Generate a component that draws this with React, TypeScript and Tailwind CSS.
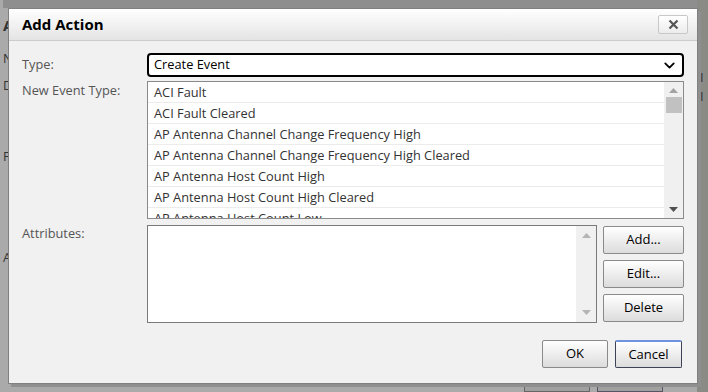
import { ChevronDown } from "lucide-react";

const eventTypes = [
  "ACI Fault",
  "ACI Fault Cleared",
  "AP Antenna Channel Change Frequency High",
  "AP Antenna Channel Change Frequency High Cleared",
  "AP Antenna Host Count High",
  "AP Antenna Host Count High Cleared",
  "AP Antenna Host Count Low",
];

function Tri({ dir, color }: { dir: "up" | "down"; color: string }) {
  return (
    <svg width="9" height="5" viewBox="0 0 9 5">
      {dir === "up" ? (
        <path d="M0 5 L4.5 0 L9 5 Z" fill={color} />
      ) : (
        <path d="M0 0 L4.5 5 L9 0 Z" fill={color} />
      )}
    </svg>
  );
}

function Btn({ label, focused }: { label: string; focused?: boolean }) {
  return (
    <button
      className={
        "flex h-[28px] w-full items-center justify-center rounded-[2px] border bg-gradient-to-b from-white to-[#dcdcdc] text-[13px] text-black " +
        (focused
          ? "border-[#3c4356] border-t-2 border-t-[#6f93de]"
          : "border-[#8a8a8a]")
      }
    >
      {label}
    </button>
  );
}

export default function App() {
  return (
    <div
      className="relative h-[392px] w-[708px] overflow-hidden bg-[#a3a3a3] text-[12.8px]"
      style={{ fontFamily: '"Open Sans", "Noto Sans", sans-serif' }}
    >
      {/* page behind the modal */}
      <div className="flex h-full flex-col bg-[#aaaaaa] pl-[3px] text-[#333]">
        <div className="h-[8px] bg-[#8e8e8e]" />
        <div className="mt-[6px] font-bold text-[15px]">A</div>
        <div className="mt-[12px]">N</div>
        <div className="mt-[8px]">D</div>
        <div className="mt-[52px]">F</div>
        <div className="mt-[82px]">A</div>
      </div>
      <div className="absolute right-0 top-0 h-full w-[11px] bg-[#8b8b86]">
        <div className="mt-[68px] pl-[3px] text-[#333]">I I</div>
      </div>
      <div className="absolute bottom-0 left-[524px] flex gap-[7px]">
        <div className="flex h-[14px] w-[66px] items-start justify-center border border-[#666] bg-[#a0a0a0] text-[#333] leading-[6px]">OK</div>
        <div className="flex h-[14px] w-[66px] items-start justify-center border border-[#556] bg-[#a0a0a0] text-[#333] leading-[6px]">Cancel</div>
      </div>

      {/* dialog */}
      <div className="absolute left-[8px] top-[8px] flex h-[376px] w-[690px] flex-col border border-[#808080] bg-[#f1f1f1] shadow-[3px_3px_0_#8f8f8f]">
        <div className="flex h-[32px] items-center justify-between border-b border-[#cccccc] bg-gradient-to-b from-white to-[#e4e4e4] pl-[13px] pr-[9px]">
          <span className="text-[15px] font-bold text-black">Add Action</span>
          <button className="flex h-[19px] w-[30px] items-center justify-center rounded-[2px] border border-[#c8c8c8] bg-gradient-to-b from-white to-[#ececec]">
            <svg width="11" height="11" viewBox="0 0 11 11">
              <path d="M1.5 1.5 L9.5 9.5 M9.5 1.5 L1.5 9.5" stroke="#555" strokeWidth="2.2" />
            </svg>
          </button>
        </div>

        <div className="grid grid-cols-[125px_1fr] gap-y-[4px] pl-[13px] pr-[13px] pt-[12px] text-[#555]">
          <div className="pt-[2px]">Type:</div>
          <div className="flex h-[24px] items-center justify-between rounded-[4px] border-2 border-black bg-white pl-[5px] pr-[4px] text-black">
            <span>Create Event</span>
            <ChevronDown size={17} strokeWidth={2.5} />
          </div>

          <div className="leading-[18px]">New Event Type:</div>
          <div className="flex h-[138px] overflow-hidden border border-[#8a8a8a] bg-white">
            <div className="flex-1 overflow-hidden">
              {eventTypes.map((t) => (
                <div
                  key={t}
                  className="flex h-[21px] shrink-0 items-center border-b border-[#ececec] pl-[6px] pt-[1px] text-[#333]"
                >
                  {t}
                </div>
              ))}
            </div>
            <div className="flex w-[19px] flex-col items-center bg-[#f0f0f0] py-[6px]">
              <Tri dir="up" color="#a3a3a3" />
              <div className="mt-[4px] h-[16px] w-[16px] bg-[#c1c1c1]" />
              <div className="flex-1" />
              <Tri dir="down" color="#505050" />
            </div>
          </div>

          <div className="mt-[1px]">Attributes:</div>
          <div className="mt-[2px] flex gap-[6px]">
            <div className="flex h-[98px] flex-1 border border-[#7a7a7a] bg-white">
              <div className="flex-1" />
              <div className="flex w-[20px] flex-col items-center justify-between bg-[#f0f0f0] py-[7px]">
                <Tri dir="up" color="#b5b5b5" />
                <Tri dir="down" color="#b5b5b5" />
              </div>
            </div>
            <div className="flex w-[81px] flex-col gap-[6px] pt-[1px]">
              <Btn label="Add..." />
              <Btn label="Edit..." />
              <Btn label="Delete" />
            </div>
          </div>
        </div>

        <div className="mt-auto flex justify-end gap-[7px] pb-[15px] pr-[15px]">
          <div className="w-[66px]"><Btn label="OK" /></div>
          <div className="w-[67px]"><Btn label="Cancel" focused /></div>
        </div>
      </div>
    </div>
  );
}
